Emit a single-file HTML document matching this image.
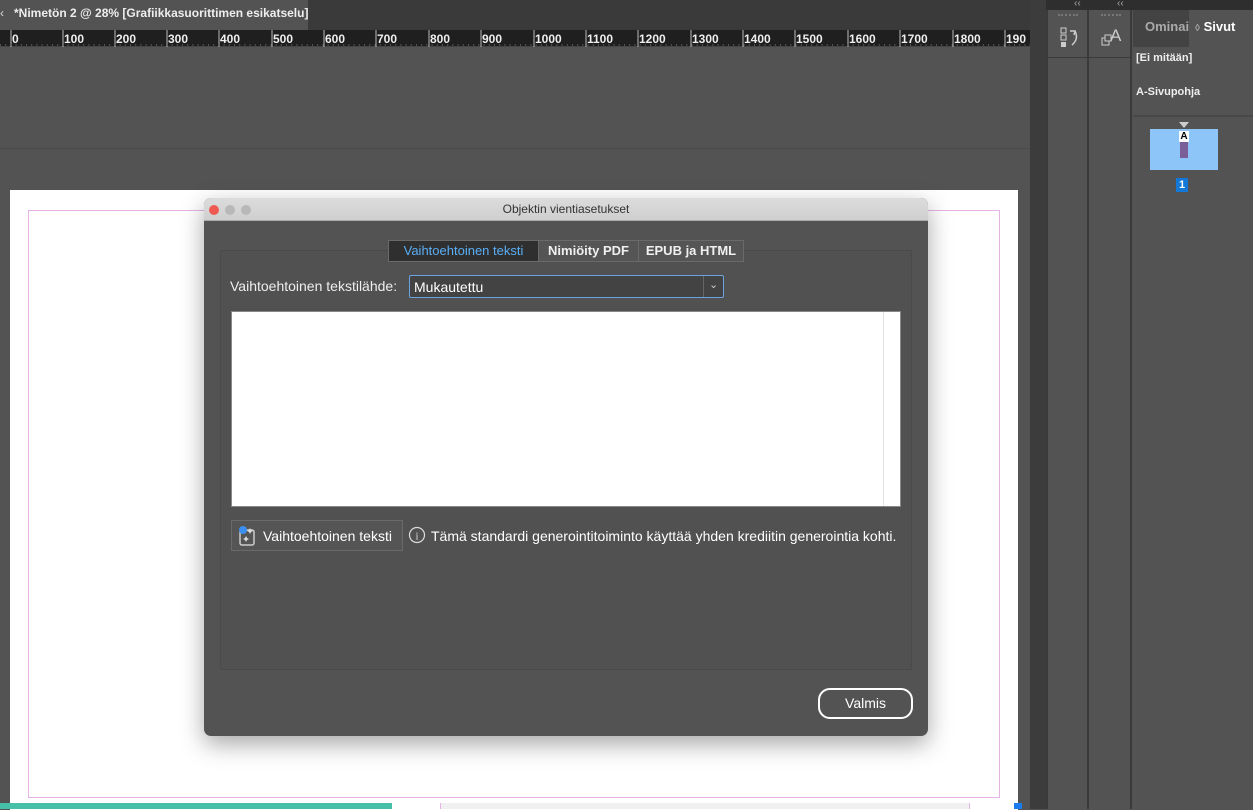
<!DOCTYPE html>
<html><head><style>
*{margin:0;padding:0;box-sizing:border-box}
body{width:1253px;height:809px;overflow:hidden;background:#535353;font-family:"Liberation Sans",sans-serif;position:relative;color:#e8e8e8}
.a{position:absolute}
.t{font-size:13px;white-space:nowrap}
</style></head><body>
<!-- top tab bar -->
<div class="a" style="left:0;top:0;width:1046px;height:30px;background:#3a3a3a"></div>
<div class="a" style="left:0;top:0;width:308px;height:30px;background:#535353"></div>
<div class="a t" style="left:0;top:6px;font-size:12px;color:#ddd">‹</div>
<div class="a t" style="left:14px;top:6px;font-size:12px;font-weight:bold;color:#eee">*Nimetön 2 @ 28% [Grafiikkasuorittimen esikatselu]</div>
<!-- ruler -->
<div class="a" style="left:0;top:30px;width:1030px;height:17px;background:#1f1f1f;border-bottom:1px solid #444"></div>
<svg class="a" style="left:0;top:30px" width="1030" height="17">
<g stroke="#bbb" stroke-width="1">
<line x1="11" y1="0" x2="11" y2="17"/><line x1="63" y1="0" x2="63" y2="17"/><line x1="115" y1="0" x2="115" y2="17"/><line x1="167" y1="0" x2="167" y2="17"/><line x1="219" y1="0" x2="219" y2="17"/><line x1="272" y1="0" x2="272" y2="17"/><line x1="324" y1="0" x2="324" y2="17"/><line x1="376" y1="0" x2="376" y2="17"/><line x1="429" y1="0" x2="429" y2="17"/><line x1="481" y1="0" x2="481" y2="17"/><line x1="534" y1="0" x2="534" y2="17"/><line x1="586" y1="0" x2="586" y2="17"/><line x1="638" y1="0" x2="638" y2="17"/><line x1="691" y1="0" x2="691" y2="17"/><line x1="743" y1="0" x2="743" y2="17"/><line x1="795" y1="0" x2="795" y2="17"/><line x1="848" y1="0" x2="848" y2="17"/><line x1="900" y1="0" x2="900" y2="17"/><line x1="953" y1="0" x2="953" y2="17"/><line x1="1005" y1="0" x2="1005" y2="17"/>
</g>
<line x1="0" y1="15" x2="1030" y2="15" stroke="#888" stroke-dasharray="1 4.2"/>
<g fill="#eee" font-size="12" font-weight="bold" font-family="Liberation Sans">
<text x="12" y="13">0</text><text x="64" y="13">100</text><text x="116" y="13">200</text><text x="168" y="13">300</text><text x="220" y="13">400</text><text x="273" y="13">500</text><text x="325" y="13">600</text><text x="377" y="13">700</text><text x="430" y="13">800</text><text x="482" y="13">900</text><text x="535" y="13">1000</text><text x="587" y="13">1100</text><text x="639" y="13">1200</text><text x="692" y="13">1300</text><text x="744" y="13">1400</text><text x="796" y="13">1500</text><text x="849" y="13">1600</text><text x="901" y="13">1700</text><text x="954" y="13">1800</text><text x="1006" y="13">190</text>
</g></svg>
<div class="a" style="left:0;top:148px;width:1030px;height:1px;background:#4a4a4a"></div>
<!-- page -->
<div class="a" style="left:10px;top:190px;width:1008px;height:620px;background:#fff"></div>
<div class="a" style="left:28px;top:210px;width:972px;height:588px;border:1px solid #e6b3e6"></div>
<div class="a" style="left:0;top:803px;width:392px;height:6px;background:#46c0a8"></div>
<div class="a" style="left:440px;top:803px;width:530px;height:6px;background:#f0f0f0;border-left:1px solid #e6b3e6;border-right:1px solid #e6b3e6"></div>
<div class="a" style="left:1014px;top:803px;width:8px;height:6px;background:#1a7cf0"></div>
<!-- right panels -->
<div class="a" style="left:1030px;top:0;width:16px;height:809px;background:#3c3c3c"></div>
<div class="a" style="left:1046px;top:0;width:207px;height:10px;background:#2e2e2e"></div>
<div class="a" style="left:1046px;top:10px;width:43px;height:799px;background:#535353;border-right:2px solid #3a3a3a;border-left:2px solid #3a3a3a"></div>
<div class="a" style="left:1089px;top:10px;width:43px;height:799px;background:#535353;border-right:2px solid #3a3a3a"></div>
<div class="a" style="left:1048px;top:57px;width:84px;height:1px;background:#3a3a3a"></div>
<div class="a t" style="left:1074px;top:-2px;font-size:10px;color:#aaa">‹‹</div>
<div class="a t" style="left:1117px;top:-2px;font-size:10px;color:#aaa">‹‹</div>
<div class="a" style="left:1058px;top:14px;width:20px;height:2px;border-top:2px dotted #777"></div>
<div class="a" style="left:1101px;top:14px;width:20px;height:2px;border-top:2px dotted #777"></div>
<svg class="a" style="left:1058px;top:25px" width="24" height="24"><g stroke="#ccc" fill="none"><rect x="3" y="3" width="5" height="5"/><rect x="3" y="10" width="5" height="5"/></g><rect x="3" y="17" width="5" height="5" fill="#ccc"/><path d="M12 6h5l-1 4 M17 6q4 8-3 14" stroke="#ccc" fill="none" stroke-width="1.5"/></svg>
<svg class="a" style="left:1100px;top:25px" width="24" height="24"><rect x="2" y="13" width="7" height="7" stroke="#ccc" fill="none"/><rect x="5" y="10" width="6" height="6" stroke="#ccc" fill="#535353"/><text x="10" y="16" fill="#ccc" font-size="17" font-family="Liberation Sans">A</text></svg>
<div class="a" style="left:1133px;top:10px;width:120px;height:799px;background:#535353"></div>
<div class="a" style="left:1133px;top:10px;width:56px;height:37px;background:#434343"></div>
<div class="a t" style="left:1145px;top:19px;font-weight:bold;color:#aaa">Ominai</div>
<div class="a t" style="left:1195px;top:19px;font-weight:bold;color:#fff"><span style="font-size:10px;color:#aaa">◊</span> Sivut</div>
<div class="a t" style="left:1136px;top:52px;font-size:11px;font-weight:bold;color:#eee">[Ei mitään]</div>
<div class="a t" style="left:1136px;top:86px;font-size:11px;font-weight:bold;color:#eee">A-Sivupohja</div>
<div class="a" style="left:1133px;top:115px;width:120px;height:2px;background:#484848"></div>
<div class="a" style="left:1179px;top:122px;width:0;height:0;border-left:5px solid transparent;border-right:5px solid transparent;border-top:6px solid #ccc"></div>
<div class="a" style="left:1150px;top:129px;width:68px;height:41px;background:#8ec5f8"></div>
<div class="a" style="left:1179px;top:131px;width:10px;height:11px;background:#fff;font-size:10px;color:#000;text-align:center;line-height:11px;font-weight:bold">A</div>
<div class="a" style="left:1180px;top:142px;width:8px;height:16px;background:#7a5f99"></div>
<div class="a" style="left:1176px;top:178px;width:12px;height:14px;background:#1478d8;font-size:11px;font-weight:bold;color:#fff;text-align:center;line-height:14px">1</div>
<!-- dialog -->
<div class="a" style="left:204px;top:198px;width:724px;height:538px;background:#535353;border-radius:7px;box-shadow:0 8px 24px rgba(0,0,0,.35);overflow:hidden">
<div class="a" style="left:0;top:0;width:724px;height:23px;background:linear-gradient(#dcdcdc,#cfcfcf);border-bottom:1px solid #aaa"></div>
<div class="a" style="left:5px;top:7px;width:10px;height:10px;border-radius:5px;background:#ee5a52"></div>
<div class="a" style="left:21px;top:7px;width:10px;height:10px;border-radius:5px;background:#b8b8b8"></div>
<div class="a" style="left:37px;top:7px;width:10px;height:10px;border-radius:5px;background:#b8b8b8"></div>
<div class="a t" style="left:0;width:724px;text-align:center;top:4px;font-size:12px;color:#333">Objektin vientiasetukset</div>
</div>
<div class="a" style="left:220px;top:250px;width:692px;height:420px;border:1px solid #4a4a4a;background:#515151"></div>
<div class="a" style="left:388px;top:240px;width:356px;height:22px;border:1px solid #6a6a6a;background:#555;display:flex">
<div style="width:150px;background:#2f2f2f;color:#5aaef5;font-size:13px;text-align:center;line-height:20px;border-right:1px solid #6a6a6a">Vaihtoehtoinen teksti</div>
<div style="width:100px;color:#f0f0f0;font-size:13px;font-weight:bold;text-align:center;line-height:20px;border-right:1px solid #6a6a6a">Nimiöity PDF</div>
<div style="flex:1;color:#f0f0f0;font-size:13px;font-weight:bold;text-align:center;line-height:20px">EPUB ja HTML</div>
</div>
<div class="a t" style="left:230px;top:278px;font-size:14px;color:#eee">Vaihtoehtoinen tekstilähde:</div>
<div class="a" style="left:409px;top:275px;width:315px;height:23px;border:1px solid #6aa3e0;background:#434343;border-radius:2px"></div>
<div class="a t" style="left:414px;top:279px;font-size:14px;color:#fff">Mukautettu</div>
<div class="a" style="left:703px;top:276px;width:1px;height:21px;background:#666"></div>
<div class="a t" style="left:709px;top:278px;font-size:11px;color:#ccc">⌄</div>
<div class="a" style="left:231px;top:311px;width:670px;height:196px;background:#fff;border:1px solid #888"></div>
<div class="a" style="left:883px;top:312px;width:1px;height:194px;background:#e4e4e4"></div>
<div class="a" style="left:231px;top:520px;width:172px;height:31px;border:1px solid #6a6a6a;background:#555"></div>
<svg class="a" style="left:236px;top:524px" width="24" height="24"><rect x="4" y="6" width="14" height="15" rx="2" stroke="#ccc" fill="none" stroke-width="1.5"/><circle cx="7" cy="6" r="4" fill="#3b8ff0"/><path d="M14 4l1 2 2 1-2 1-1 2-1-2-2-1 2-1z M10 12l1 2 2 1-2 1-1 2-1-2-2-1 2-1z" fill="#ddd"/></svg>
<div class="a t" style="left:263px;top:528px;font-size:14px;color:#fff">Vaihtoehtoinen teksti</div>
<svg class="a" style="left:408px;top:526px" width="18" height="18"><circle cx="9" cy="9" r="7.5" stroke="#ddd" fill="none" stroke-width="1.2"/><text x="7.5" y="13.5" fill="#ddd" font-size="11" font-family="Liberation Serif">i</text></svg>
<div class="a t" style="left:431px;top:528px;font-size:14px;color:#fff">Tämä standardi generointitoiminto käyttää yhden krediitin generointia kohti.</div>
<div class="a" style="left:818px;top:688px;width:95px;height:31px;border:2px solid #fff;border-radius:12px;background:#535353;color:#fff;font-size:14px;text-align:center;line-height:27px">Valmis</div>
</body></html>
